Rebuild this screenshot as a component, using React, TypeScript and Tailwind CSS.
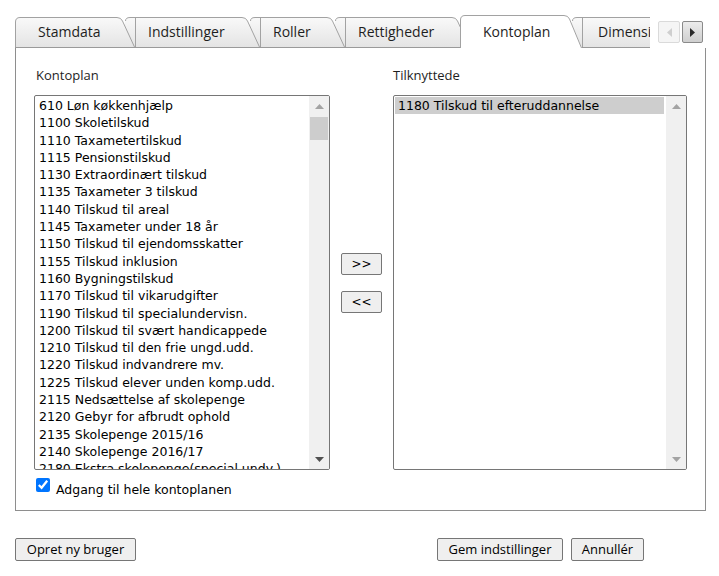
const LEFT_ITEMS = [
  '610 Løn køkkenhjælp',
  '1100 Skoletilskud',
  '1110 Taxametertilskud',
  '1115 Pensionstilskud',
  '1130 Extraordinært tilskud',
  '1135 Taxameter 3 tilskud',
  '1140 Tilskud til areal',
  '1145 Taxameter under 18 år',
  '1150 Tilskud til ejendomsskatter',
  '1155 Tilskud inklusion',
  '1160 Bygningstilskud',
  '1170 Tilskud til vikarudgifter',
  '1190 Tilskud til specialundervisn.',
  '1200 Tilskud til svært handicappede',
  '1210 Tilskud til den frie ungd.udd.',
  '1220 Tilskud indvandrere mv.',
  '1225 Tilskud elever unden komp.udd.',
  '2115 Nedsættelse af skolepenge',
  '2120 Gebyr for afbrudt ophold',
  '2135 Skolepenge 2015/16',
  '2140 Skolepenge 2016/17',
  '2180 Ekstra skolepenge(special undv.)',
]

const SEGOE = "font-['Open_Sans',sans-serif]"
const VERDANA = "font-['DejaVu_Sans',Verdana,sans-serif]"

type TabProps = {
  label: string
  w: number
  z: string
  first?: boolean
  active?: boolean
  clip?: boolean
}

function Tab({ label, w, z, first, active, clip }: TabProps) {
  const h = active ? 33 : 30
  const id = 'g' + label
  const fill = `M0 ${h} V5 Q0 0.5 5 0.5 H${w - 18} Q${w - 14} 0.5 ${w - 12.5} 4 L${w} ${h} Z`
  const edge = active || first
    ? `M0.5 ${h} V5 Q0.5 0.5 5 0.5 H${w - 18} Q${w - 14} 0.5 ${w - 12.5} 4 L${w - 0.5} ${h}`
    : clip
      ? `M0.5 4 Q0.5 0.5 5 0.5 H${w + 20} M10.5 0.5 V${h}`
      : `M0.5 4 Q0.5 0.5 5 0.5 H${w - 18} Q${w - 14} 0.5 ${w - 12.5} 4 L${w - 0.5} ${h} M10.5 0.5 V${h}`
  return (
    <div
      className={`relative shrink-0 ${z} ${first ? '' : 'ml-[-10px]'} ${active ? 'h-[33px]' : 'h-[30px] mt-[2px]'} ${clip ? 'overflow-hidden' : ''}`}
      style={{ width: w }}
    >
      <svg className="absolute inset-0" width={clip ? w + 30 : w} height={h}>
        <defs>
          <linearGradient id={id} x1="0" y1="0" x2="0" y2="1">
            <stop offset="0" stopColor={active ? '#ffffff' : '#f9f9f9'} />
            <stop offset="1" stopColor={active ? '#ffffff' : '#e4e4e4'} />
          </linearGradient>
        </defs>
        <path d={clip ? `M0 ${h} V5 Q0 0.5 5 0.5 H${w + 30} V${h} Z` : fill} fill={`url(#${id})`} />
        <path d={edge} fill="none" stroke="#a2a2a2" strokeWidth="1" />
      </svg>
      <span
        className={`relative block whitespace-nowrap text-[14px] text-[#1e1e1e] ${SEGOE} ${active ? 'pt-[6px]' : 'pt-[4px]'} ${clip ? 'pl-[26px]' : 'pl-[23px]'}`}
      >
        {label}
      </span>
    </div>
  )
}

function Arrow({ dir, color }: { dir: 'up' | 'down'; color: string }) {
  return (
    <svg width="9" height="5" viewBox="0 0 9 5">
      <path d={dir === 'up' ? 'M0 5 L4.5 0 L9 5 Z' : 'M0 0 L9 0 L4.5 5 Z'} fill={color} />
    </svg>
  )
}

function Scrollbar({ thumb, downColor }: { thumb?: boolean; downColor: string }) {
  return (
    <div className="w-[20px] shrink-0 bg-[#f0f0f0] flex flex-col">
      <div className="h-[20px] flex items-center justify-center">
        <Arrow dir="up" color="#a3a3a3" />
      </div>
      {thumb && <div className="mx-[1px] mt-[1px] h-[23px] bg-[#cdcdcd]" />}
      <div className="flex-1" />
      <div className="h-[20px] flex items-center justify-center">
        <Arrow dir="down" color={downColor} />
      </div>
    </div>
  )
}

function Btn({ label, className }: { label: string; className: string }) {
  return (
    <button
      className={`h-[23px] rounded-[2px] border border-[#767676] bg-[#efefef] text-[13px] text-black ${SEGOE} ${className}`}
    >
      {label}
    </button>
  )
}

export default function App() {
  return (
    <div className="w-[719px] h-[576px] bg-white overflow-hidden">
      {/* Tab strip */}
      <div className="flex items-start pl-[15px] pt-[15px]">
        <div className="relative z-10 flex items-start w-[635px] h-[33px] border-b border-[#9a9a9a]">
          <Tab label="Stamdata" w={120} z="z-[6]" first />
          <Tab label="Indstillinger" w={135} z="z-[5]" />
          <Tab label="Roller" w={95} z="z-[4]" />
          <Tab label="Rettigheder" w={135} z="z-[3]" />
          <Tab label="Kontoplan" w={122} z="z-[10]" active />
          <Tab label="Dimensioner" w={78} z="z-[1]" clip />
        </div>
        <div className="ml-[8px] mt-[6px] flex gap-[2px]">
          <div className="w-[22px] h-[22px] rounded-[2px] border border-[#dadada] bg-[#f5f5f5] flex items-center justify-center">
            <svg width="5" height="9" viewBox="0 0 5 9"><path d="M5 0 L0 4.5 L5 9 Z" fill="#cfcfcf" /></svg>
          </div>
          <div className="w-[21px] h-[22px] rounded-[2px] border border-[#8a8a8a] bg-gradient-to-b from-[#ececec] to-[#cfcfcf] flex items-center justify-center">
            <svg width="5" height="9" viewBox="0 0 5 9"><path d="M0 0 L5 4.5 L0 9 Z" fill="#2b2b2b" /></svg>
          </div>
        </div>
      </div>

      {/* Panel */}
      <div className="ml-[15px] w-[691px] h-[463px] border border-t-0 border-[#8e8e8e] px-[18px] pt-[18px]">
        <div className="flex">
          <div className="w-[296px] pl-[2px]">
            <div className={`h-[18px] leading-[18px] text-[13px] text-[#1e1e1e] ${SEGOE}`}>Kontoplan</div>
          </div>
          <div className="w-[63px]" />
          <div className="w-[294px]">
            <div className={`h-[18px] leading-[18px] text-[13px] text-[#1e1e1e] ${SEGOE}`}>Tilknyttede</div>
          </div>
        </div>

        <div className="flex mt-[11px]">
          <div className="w-[296px] h-[375px] border border-[#767676] rounded-[2px] flex overflow-hidden">
            <div className={`flex-1 p-[1px] overflow-hidden ${VERDANA} text-[12.5px] text-black`}>
              {LEFT_ITEMS.map((t) => (
                <div key={t} className="h-[17.3px] leading-[17.3px] px-[3px] whitespace-nowrap">{t}</div>
              ))}
            </div>
            <Scrollbar thumb downColor="#505050" />
          </div>

          <div className="w-[63px] flex flex-col items-center justify-center gap-[16px]">
            <button className={`w-[41px] h-[22px] rounded-[2px] border border-[#767676] bg-[#efefef] text-[12px] text-black ${VERDANA}`}>&gt;&gt;</button>
            <button className={`w-[41px] h-[22px] rounded-[2px] border border-[#767676] bg-[#efefef] text-[12px] text-black ${VERDANA}`}>&lt;&lt;</button>
          </div>

          <div className="w-[294px] h-[375px] border border-[#767676] rounded-[2px] flex overflow-hidden">
            <div className={`flex-1 p-[1px] overflow-hidden ${VERDANA} text-[12.5px] text-black`}>
              <div className="h-[17.3px] leading-[17.3px] px-[3px] mr-[1px] whitespace-nowrap bg-[#cecece]">1180 Tilskud til efteruddannelse</div>
            </div>
            <Scrollbar downColor="#a3a3a3" />
          </div>
        </div>

        <div className={`flex items-start mt-[8px] ml-[2px] gap-[6px] ${VERDANA} text-[12.5px] leading-[17px] text-black`}>
          <input type="checkbox" checked readOnly className="w-[14px] h-[14px] m-0 accent-[#0075ff]" />
          <span className="mt-[3px]">Adgang til hele kontoplanen</span>
        </div>
      </div>

      {/* Footer buttons */}
      <div className="flex items-start mt-[27px] pl-[15px]">
        <Btn label="Opret ny bruger" className="w-[121px]" />
        <Btn label="Gem indstillinger" className="w-[126px] ml-[301px]" />
        <Btn label="Annullér" className="w-[73px] ml-[8px]" />
      </div>
    </div>
  )
}
